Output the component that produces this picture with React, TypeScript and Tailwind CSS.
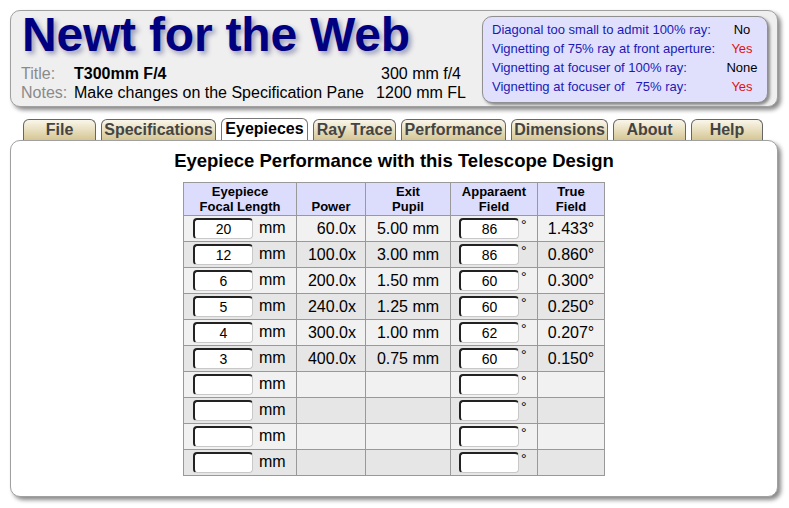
import React from "react";

const tabs = [
  { label: "File", w: "w-[73px]" },
  { label: "Specifications", w: "w-[115px]" },
  { label: "Eyepieces", w: "w-[87px]", active: true },
  { label: "Ray Trace", w: "w-[83px]" },
  { label: "Performance", w: "w-[105px]" },
  { label: "Dimensions", w: "w-[97px]" },
  { label: "About", w: "w-[73px]" },
  { label: "Help", w: "w-[72px]" },
];

const rows: { fl: string; power: string; exit: string; af: string; tf: string }[] = [
  { fl: "20", power: "60.0x", exit: "5.00 mm", af: "86", tf: "1.433°" },
  { fl: "12", power: "100.0x", exit: "3.00 mm", af: "86", tf: "0.860°" },
  { fl: "6", power: "200.0x", exit: "1.50 mm", af: "60", tf: "0.300°" },
  { fl: "5", power: "240.0x", exit: "1.25 mm", af: "60", tf: "0.250°" },
  { fl: "4", power: "300.0x", exit: "1.00 mm", af: "62", tf: "0.207°" },
  { fl: "3", power: "400.0x", exit: "0.75 mm", af: "60", tf: "0.150°" },
  { fl: "", power: "", exit: "", af: "", tf: "" },
  { fl: "", power: "", exit: "", af: "", tf: "" },
  { fl: "", power: "", exit: "", af: "", tf: "" },
  { fl: "", power: "", exit: "", af: "", tf: "" },
];

function Box({ value }: { value: string }) {
  return (
    <div className="w-[60px] h-[21px] bg-white rounded-[4px] border border-t-[#222] border-l-[#222] border-b-[#c8c8c8] border-r-[#c8c8c8] border-t-2 border-l-2 flex items-center justify-center text-[14px] leading-none text-black">
      {value}
    </div>
  );
}

export default function App() {
  return (
    <div className="w-[789px] h-[508px] bg-white text-black" style={{ fontFamily: '"Liberation Sans", Arial, sans-serif' }}>
      <div className="pt-[10px] px-[10px]">
        {/* Header */}
        <div className="w-[768px] h-[97px] rounded-[10px] border border-[#a0a0a0] bg-[#efefef] shadow-[3px_3px_4px_#8a8a8a] flex">
          <div className="flex flex-col pl-[10px]">
            <div className="text-[48px] leading-[47px] font-bold text-[#000080] pl-[1px] [text-shadow:3px_3px_5px_#9a9ab8] tracking-[-0.2px]">
              Newt for the Web
            </div>
            <div className="grid grid-cols-[53px_297px_100px] text-[16px] leading-[19px] mt-[6px]">
              <div className="text-[#8a8a8a]">Title:</div>
              <div className="font-bold">T300mm F/4</div>
              <div className="text-center">300 mm f/4</div>
              <div className="text-[#8a8a8a]">Notes:</div>
              <div>Make changes on the Specification Pane</div>
              <div className="text-center">1200 mm FL</div>
            </div>
          </div>
          <div className="ml-auto mr-[9px] mt-[5px] w-[286px] h-[87px] rounded-[10px] border border-[#909090] bg-[#e0e0fc] shadow-[2px_2px_3px_#8a8a8a] pl-[9px] pt-[3px]">
            <div className="grid grid-cols-[230px_40px] text-[13px] leading-[19px] whitespace-nowrap">
              <div className="text-[#1a1ab8]">Diagonal too small to admit 100% ray:</div>
              <div className="text-center">No</div>
              <div className="text-[#1a1ab8]">Vignetting of 75% ray at front aperture:</div>
              <div className="text-center text-[#e01010]">Yes</div>
              <div className="text-[#1a1ab8]">Vignetting at focuser of 100% ray:</div>
              <div className="text-center">None</div>
              <div className="text-[#1a1ab8] whitespace-pre">Vignetting at focuser of   75% ray:</div>
              <div className="text-center text-[#e01010]">Yes</div>
            </div>
          </div>
        </div>

        {/* Tabs */}
        <div className="flex gap-[5px] pl-[13px] mt-[11px] relative z-10">
          {tabs.map((t) => (
            <div
              key={t.label}
              className={
                t.active
                  ? `${t.w} h-[22px] rounded-t-[6px] border border-b-0 border-[#777] bg-white text-black font-bold text-[16px] leading-[20px] text-center -mb-px`
                  : `${t.w} h-[21px] rounded-t-[6px] border border-b-0 border-[#666] bg-gradient-to-b from-[#faf7ea] to-[#d6c694] text-[#444] font-bold text-[16px] leading-[20px] text-center mt-px`
              }
            >
              {t.label}
            </div>
          ))}
        </div>

        {/* Panel */}
        <div className="w-[768px] h-[357px] rounded-[10px] border border-[#a0a0a0] bg-white shadow-[3px_3px_4px_#8a8a8a] flex flex-col items-center pt-[9px]">
          <div className="text-[18.5px] leading-[22px] font-bold">Eyepiece Performance with this Telescope Design</div>
          <table className="mt-[10px] border-collapse border border-[#999] text-[16px]">
            <thead>
              <tr className="bg-[#dcdcfc] h-[33px] text-[13px] leading-[15px] font-bold">
                <th className="w-[113px] border border-[#999] font-bold align-bottom pb-[1px]">Eyepiece<br />Focal Length</th>
                <th className="w-[69px] border border-[#999] font-bold align-bottom pb-[1px]">Power</th>
                <th className="w-[85px] border border-[#999] font-bold align-bottom pb-[1px]">Exit<br />Pupil</th>
                <th className="w-[87px] border border-[#999] font-bold align-bottom pb-[1px]">Apparaent<br />Field</th>
                <th className="w-[67px] border border-[#999] font-bold align-bottom pb-[1px]">True<br />Field</th>
              </tr>
            </thead>
            <tbody>
              {rows.map((r, i) => (
                <tr key={i} className={`h-[26px] ${i % 2 === 0 ? "bg-[#f1f1f1]" : "bg-[#e6e6e6]"}`}>
                  <td className="border border-[#999] p-0">
                    <div className="flex items-center pl-[9px] gap-[6px]">
                      <Box value={r.fl} />
                      <span className="leading-[18px] pb-[2px]">mm</span>
                    </div>
                  </td>
                  <td className="border border-[#999] text-right pr-[9px] leading-[18px]">{r.power}</td>
                  <td className="border border-[#999] text-center leading-[18px]">{r.exit}</td>
                  <td className="border border-[#999] p-0">
                    <div className="flex items-start pl-[8px] gap-[2px]">
                      <Box value={r.af} />
                      <span className="leading-[14px] text-[14px]">°</span>
                    </div>
                  </td>
                  <td className="border border-[#999] text-center leading-[18px]">{r.tf}</td>
                </tr>
              ))}
            </tbody>
          </table>
        </div>
      </div>
    </div>
  );
}
